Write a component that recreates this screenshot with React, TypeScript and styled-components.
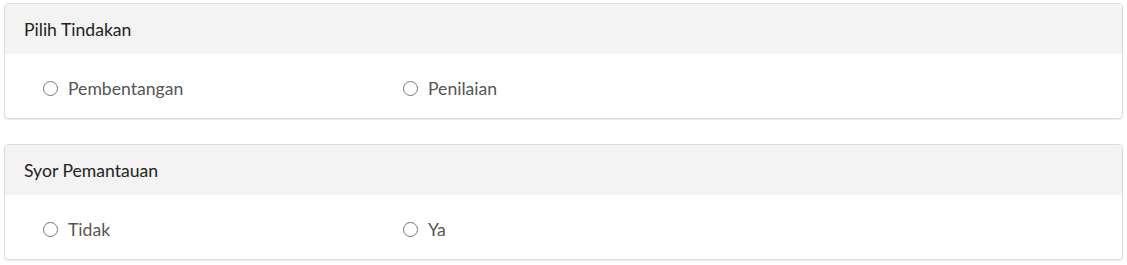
import React, { useState } from 'react';
import styled, { createGlobalStyle } from 'styled-components';

const GlobalStyle = createGlobalStyle`
  body {
    margin: 0;
    background: #fff;
    font-family: Lato, "Open Sans", sans-serif;
  }
`;

const Page = styled.div`
  display: flex;
  flex-direction: column;
  gap: 25px;
  padding: 3px 4px;
`;

const Card = styled.section`
  border: 1px solid #dcdcdc;
  border-radius: 4px;
  box-shadow: 0 1px 1px rgba(0, 0, 0, 0.08);
  overflow: hidden;
  background: #fff;
`;

const Header = styled.div`
  height: 50px;
  display: flex;
  align-items: center;
  padding: 0 19px;
  background: #f3f3f3;
  font-size: 17.6px;
  color: #222;
`;

const Body = styled.div`
  height: 64px;
  box-sizing: border-box;
  display: grid;
  grid-template-columns: 360px 360px;
  align-items: center;
  padding: 4px 38px 0;
`;

const Option = styled.label`
  display: flex;
  align-items: center;
  gap: 10px;
  font-size: 17.6px;
  color: #555;
  cursor: pointer;
`;

const Circle = styled.span<{ $checked: boolean }>`
  width: 15px;
  height: 15px;
  box-sizing: border-box;
  border-radius: 50%;
  border: 1.5px solid #767676;
  display: flex;
  align-items: center;
  justify-content: center;
  &::after {
    content: '';
    width: 7px;
    height: 7px;
    border-radius: 50%;
    background: ${(p) => (p.$checked ? '#555' : 'transparent')};
  }
`;

const Hidden = styled.input`
  display: none;
`;

const Group = ({ title, options }: { title: string; options: string[] }) => {
  const [value, setValue] = useState<string | null>(null);
  return (
    <Card>
      <Header>{title}</Header>
      <Body>
        {options.map((o) => (
          <Option key={o}>
            <Hidden type="radio" name={title} checked={value === o} onChange={() => setValue(o)} />
            <Circle $checked={value === o} />
            {o}
          </Option>
        ))}
      </Body>
    </Card>
  );
};

const App = () => (
  <>
    <GlobalStyle />
    <Page>
      <Group title="Pilih Tindakan" options={['Pembentangan', 'Penilaian']} />
      <Group title="Syor Pemantauan" options={['Tidak', 'Ya']} />
    </Page>
  </>
);

export default App;
